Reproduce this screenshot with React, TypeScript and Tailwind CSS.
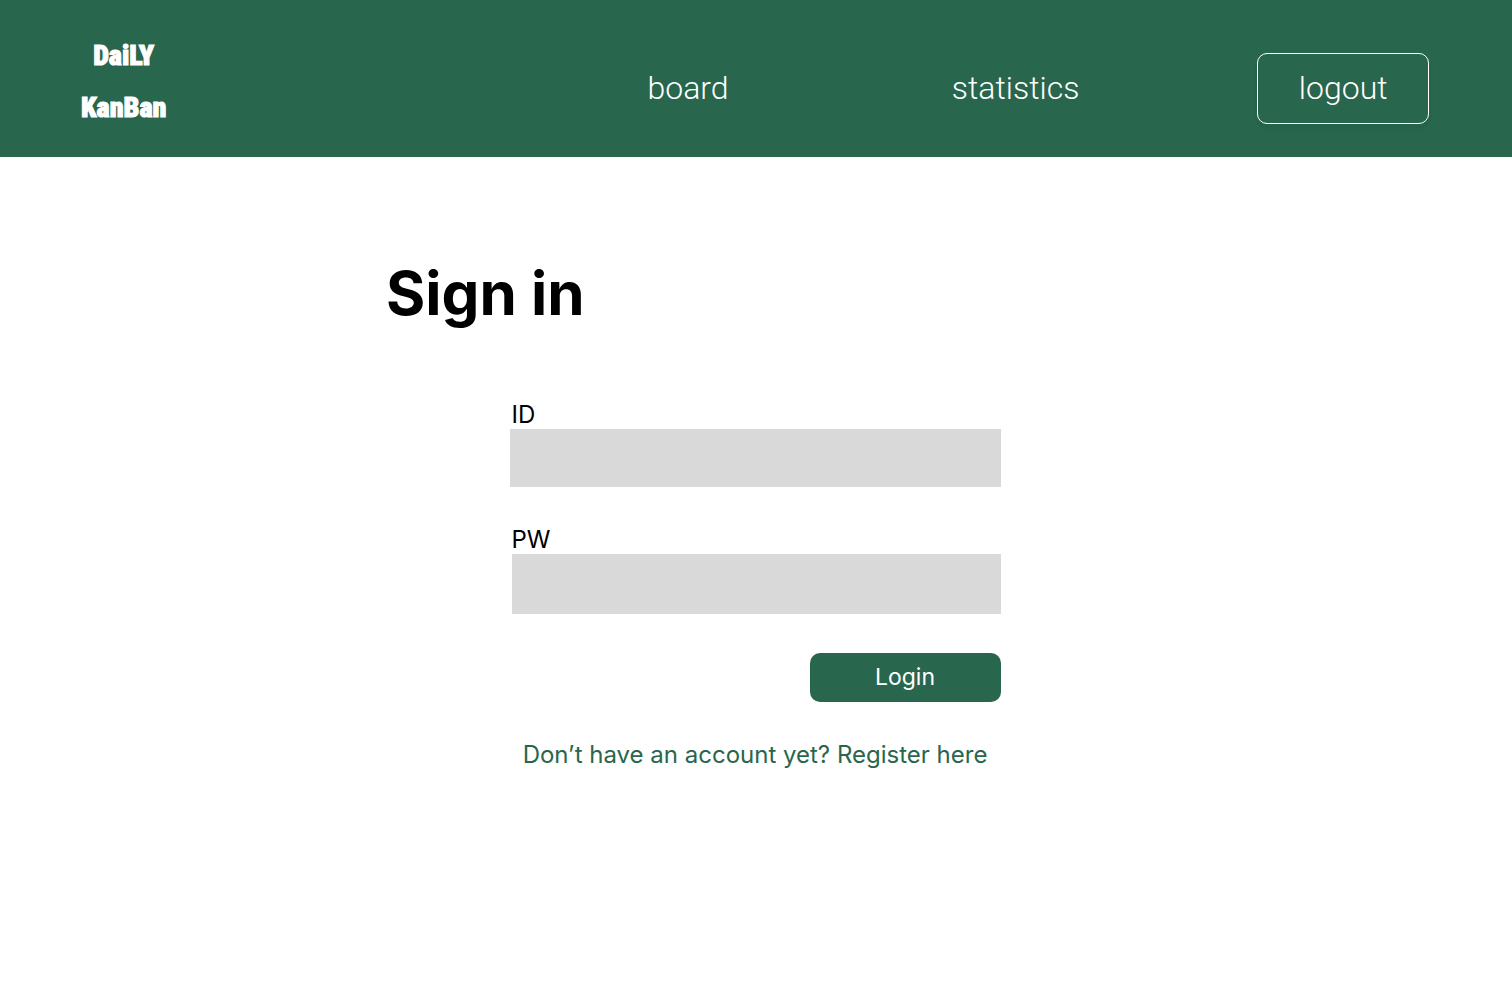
export default function App() {
  return (
    <div className="min-h-screen bg-white font-['Inter',sans-serif] text-black">
      <header className="flex items-center justify-between bg-[#28664d] pb-[23px] pl-[81px] pt-[26px] text-white">
        <a
          href="#home"
          className="flex flex-col items-center pt-1 font-['Roboto_Condensed','Roboto',sans-serif] text-[28px] font-black leading-[52px] [-webkit-text-stroke:1px_white]"
        >
          <span>DaiLY</span>
          <span>KanBan</span>
        </a>
        <nav className="mr-[5px] grid w-[65vw] grid-cols-3 items-center justify-items-center pt-4 font-['Roboto',sans-serif] text-[32px] font-light">
          <a href="#board">board</a>
          <a href="#statistics">statistics</a>
          <button
            type="button"
            className="h-[71px] w-[172px] rounded-[10px] border border-white font-light shadow-[0_4px_4px_rgba(0,0,0,0.05)]"
          >
            logout
          </button>
        </nav>
      </header>
      <main className="mx-auto w-full max-w-[740px] pr-0.5 pt-[98px]">
        <h1 className="text-[60px] font-bold leading-[77px]">Sign in</h1>
        <form className="mx-auto flex max-w-[491px] flex-col pt-[68px] text-2xl leading-[29px]">
          <label htmlFor="user-id" className="pl-0.5">ID</label>
          <input id="user-id" type="text" className="h-[58px] w-full bg-[#d9d9d9] px-4" />
          <label htmlFor="password" className="mt-[38px] pl-0.5">PW</label>
          <input
            id="password"
            type="password"
            className="ml-0.5 h-[60px] bg-[#d9d9d9] px-4"
          />
          <button
            type="submit"
            className="mt-[39px] h-[49px] w-[191px] self-end rounded-[10px] bg-[#28664d] text-[23px] text-white"
          >
            Login
          </button>
          <a href="#register" className="mt-[38px] text-center text-[#28664d]">
            Don’t have an account yet? Register here
          </a>
        </form>
      </main>
    </div>
  );
}
